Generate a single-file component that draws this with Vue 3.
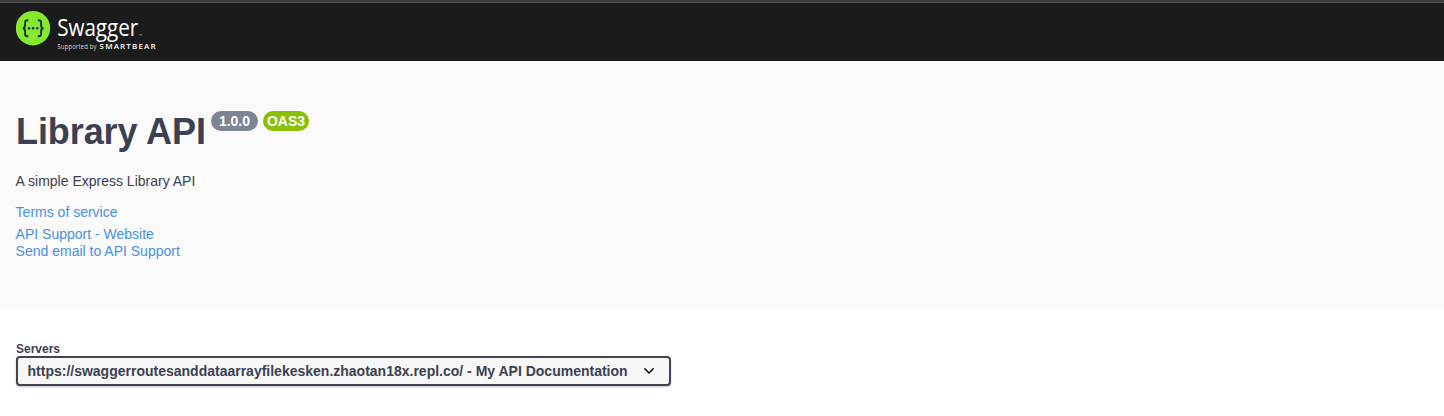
<script setup>
const versions = [
  { label: '1.0.0', kind: 'version' },
  { label: 'OAS3', kind: 'oas' },
]
const server = 'https://swaggerroutesanddataarrayfilekesken.zhaotan18x.repl.co/ - My API Documentation'
</script>

<template>
  <div class="page">
    <header class="topbar">
      <svg class="logo" width="150" height="44" viewBox="0 0 150 44" role="img" aria-label="Swagger">
        <circle cx="17" cy="17.2" r="17.2" fill="#85ea2d" />
        <g fill="none" stroke="#173647" stroke-width="2">
          <path d="M12.4 9.2h-1q-2.3 0-2.3 2.3v2.8q0 2.7-2.3 2.9 2.3.2 2.3 2.9v2.8q0 2.3 2.3 2.3h1" />
          <path d="M21.8 9.2h1q2.3 0 2.3 2.3v2.8q0 2.7 2.3 2.9-2.3.2-2.3 2.9v2.8q0 2.3-2.3 2.3h-1" />
        </g>
        <g fill="#173647">
          <circle cx="13" cy="17.2" r="1.2" />
          <circle cx="17.1" cy="17.2" r="1.2" />
          <circle cx="21.2" cy="17.2" r="1.2" />
        </g>
        <text class="word" x="41.2" y="24.9" textLength="81" lengthAdjust="spacingAndGlyphs">Swagger</text>
        <rect x="123.5" y="23.3" width="2.5" height="1" fill="#8a8a8a" />
        <text class="supported" x="41.5" y="37.9" textLength="39" lengthAdjust="spacingAndGlyphs">Supported by</text>
        <text class="smartbear" x="83.6" y="37.9" textLength="57.2" lengthAdjust="spacingAndGlyphs">SMARTBEAR</text>
      </svg>
    </header>

    <section class="info">
      <div class="heading">
        <h1>Library API</h1>
        <span v-for="v in versions" :key="v.label" class="badge" :class="v.kind">{{ v.label }}</span>
      </div>
      <p class="description">A simple Express Library API</p>
      <a class="terms">Terms of service</a>
      <a>API Support - Website</a>
      <a>Send email to API Support</a>
    </section>

    <section class="servers">
      <span class="label">Servers</span>
      <div class="select">
        <span>{{ server }}</span>
        <svg width="12" height="8" viewBox="0 0 12 8">
          <path d="M1.8 1.8 6 6l4.2-4.2" fill="none" stroke="#111" stroke-width="1.6" stroke-linecap="round" stroke-linejoin="round" />
        </svg>
      </div>
    </section>
  </div>
</template>

<style>
body {
  background: #fff;
}
</style>

<style scoped>
.page {
  height: 416px;
  overflow: hidden;
  color: #3b4151;
  font-family: "Liberation Sans", Arial, sans-serif;
}
.topbar {
  box-sizing: border-box;
  height: 61px;
  padding: 11px 16px 0;
  background: linear-gradient(#3a3a3a 2px, #555 2px, #555 3px, #1b1b1b 3px);
}
.logo {
  display: block;
}
.logo text {
  font-family: "Open Sans", "Noto Sans", sans-serif;
  fill: #fff;
}
.logo .word {
  font-size: 23.5px;
}
.logo .supported {
  font-size: 6.2px;
  letter-spacing: 0.2px;
  fill: #ddd;
}
.logo .smartbear {
  font-size: 7.6px;
  font-weight: 600;
  letter-spacing: 1.1px;
}
.info {
  box-sizing: border-box;
  height: 248px;
  padding: 50px 15.6px 0;
  background: #fafafa;
}
.heading {
  display: flex;
  height: 41px;
}
h1 {
  margin: 0;
  width: 190.4px;
  font-size: 36px;
  letter-spacing: -0.08px;
  line-height: 41px;
  text-indent: 0.4px;
  white-space: nowrap;
}
.badge {
  box-sizing: border-box;
  height: 20px;
  margin-left: 5px;
  border-radius: 10px;
  color: #fff;
  font-size: 14px;
  font-weight: 700;
  line-height: 20px;
  text-align: center;
}
.version {
  width: 47px;
  background: #7d8492;
}
.oas {
  width: 46px;
  background: #89bf04;
}
.description {
  margin: 21px 0 15px;
  font-size: 14px;
  line-height: 16px;
}
.info a {
  display: block;
  color: #4990e2;
  font-size: 14px;
  line-height: 17px;
}
.info .terms {
  margin-bottom: 5px;
}
.servers {
  padding: 33px 16px 0;
}
.label {
  display: block;
  height: 14px;
  font-size: 12px;
  font-weight: 700;
  line-height: 14px;
}
.select {
  box-sizing: border-box;
  display: flex;
  align-items: center;
  justify-content: space-between;
  width: 655px;
  height: 30px;
  padding: 0 14px 0 9.5px;
  border: 2px solid #41444e;
  border-radius: 4px;
  background: #f7f7f7;
  box-shadow: 0 1px 2px rgba(0, 0, 0, 0.25);
  font-size: 14px;
  font-weight: 700;
  white-space: nowrap;
}
</style>
